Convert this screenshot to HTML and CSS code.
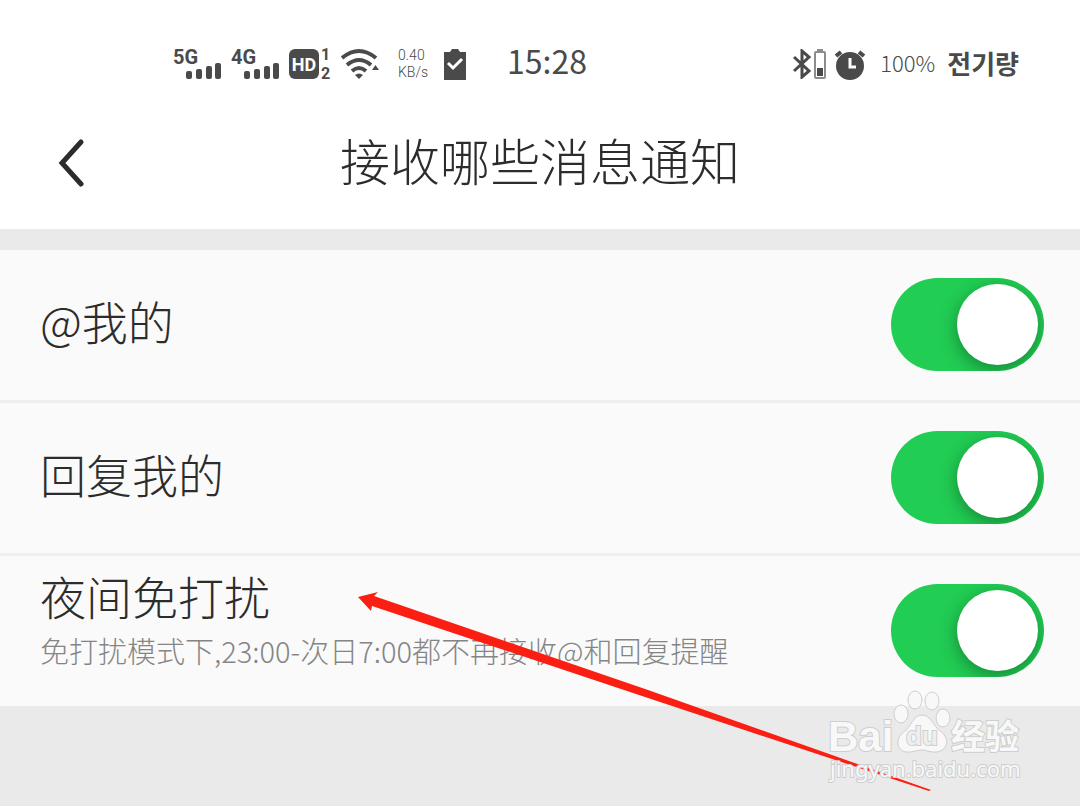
FILE: index.html
```html
<!DOCTYPE html>
<html lang="zh-CN">
<head>
	<title>接收哪些消息通知</title>
	<meta charset="utf-8">
	<meta name="viewport" content="width=device-width, initial-scale=1">
	<link rel="stylesheet" href="styles.css">
</head>
<body>
	<!-- 状态栏 -->
	<div class="status">
		<div class="status-left">
			<svg class="signal" width="49" height="40" viewBox="0 -3 49 40">
				<text x="0" y="17">5G</text>
				<rect x="13" y="24" width="6" height="8" rx="2"/>
				<rect x="23" y="22" width="6" height="10" rx="2"/>
				<rect x="33" y="19" width="6" height="13" rx="2"/>
				<rect x="42" y="16" width="6" height="16" rx="2"/>
			</svg>
			<svg class="signal" width="49" height="40" viewBox="0 -3 49 40">
				<text x="0" y="17">4G</text>
				<rect x="13" y="24" width="6" height="8" rx="2"/>
				<rect x="23" y="22" width="6" height="10" rx="2"/>
				<rect x="33" y="19" width="6" height="13" rx="2"/>
				<rect x="42" y="16" width="6" height="16" rx="2"/>
			</svg>
			<svg class="hd" width="43" height="40" viewBox="0 -3 43 40">
				<rect x="0" y="2" width="30" height="30" rx="6"/>
				<text class="hd-text" x="15" y="24">HD</text>
				<text class="sim" x="32" y="13">1</text>
				<text class="sim" x="32" y="32">2</text>
			</svg>
			<svg class="wifi" width="39" height="32" viewBox="0 0 39 32">
				<path d="M1 10Q18 -4 35 10M6 17Q18 7 30 17M11 23Q18 17 25 23"/>
				<path class="fill" d="M14 27Q18 24 22 27L18 31ZM31 22L34.500 17L38 22Z"/>
			</svg>
			<div class="speed">
				<span>0.40</span>
				<span>KB/s</span>
			</div>
			<svg class="clipboard" width="22" height="31" viewBox="0 0 22 31">
				<path d="M0 3H6L8 0H14L16 3H22V31H0Z"/>
				<path class="tick" d="M4 14L9 19L18 10"/>
			</svg>
			<span class="time">15:28</span>
		</div>
		<div class="status-right">
			<svg class="bluetooth" width="20" height="30" viewBox="0 0 20 30">
				<path d="M2 8L17 22L10 28V2L17 8L2 22"/>
			</svg>
			<svg class="battery" width="12" height="30" viewBox="0 0 12 30">
				<rect class="shell" x="1" y="3" width="10" height="26" rx="1"/>
				<rect class="cap" x="3" y="0" width="6" height="3"/>
				<rect x="3" y="19" width="6" height="8"/>
			</svg>
			<svg class="alarm" width="32" height="31" viewBox="0 0 32 31">
				<circle cx="16" cy="17" r="14"/>
				<path d="M2 7L7 3M30 7L25 3"/>
				<path class="hand" d="M16 9V18H22"/>
			</svg>
			<span class="percent">100%</span>
			<span class="power" lang="ko">전기량</span>
		</div>
	</div>

	<!-- 标题栏 -->
	<header class="header">
		<button class="back" type="button" aria-label="返回">
			<svg width="26" height="50" viewBox="0 0 26 50">
				<path d="M23 4L4 25L23 46"/>
			</svg>
		</button>
		<h1>接收哪些消息通知</h1>
	</header>

	<!-- 设置列表 -->
	<main class="list">
		<div class="item">
			<label for="at">@我的</label>
			<input class="switch" type="checkbox" id="at" checked>
		</div>
		<div class="item">
			<label for="reply">回复我的</label>
			<input class="switch" type="checkbox" id="reply" checked>
		</div>
		<div class="item">
			<label for="night">
				夜间免打扰
				<small>免打扰模式下,23:00-次日7:00都不再接收@和回复提醒</small>
			</label>
			<input class="switch" type="checkbox" id="night" checked>
		</div>

		<!-- 红色箭头 -->
		<svg class="arrow" width="574" height="200" viewBox="0 0 574 200">
			<path d="M0 6L20 1L16 5L290 99L573 199L571 200L287 106L14 15L13 20Z"/>
		</svg>
	</main>

	<!-- 水印 -->
	<div class="watermark">
		<svg width="196" height="98" viewBox="0 0 196 98">
			<text class="bai" x="0" y="61">Bai</text>
			<ellipse cx="73" cy="24" rx="7" ry="9"/>
			<ellipse cx="87" cy="10" rx="7" ry="9"/>
			<ellipse cx="104" cy="11" rx="7" ry="9"/>
			<ellipse cx="115" cy="28" rx="7" ry="9"/>
			<path d="M94 25C103 25 105 36 112 41C121 47 122 59 109 62C103 63 99 60 94 60C88 60 84 63 78 62C67 60 68 47 76 42C83 37 85 25 94 25Z"/>
			<text class="du" x="94" y="55">du</text>
			<text class="jingyan" x="123" y="59">经验</text>
			<text class="site" x="2" y="87">jingyan.baidu.com</text>
		</svg>
	</div>
</body>
</html>
```

FILE: styles.css
```css
*{
	box-sizing: border-box;
}
body{
	margin: 0;
	min-height: 100vh;
	background-color: #eaeaea;
	color: #2c2c2c;
	font-family: "Noto Sans CJK SC", sans-serif;
	font-weight: 300;
	/*相对定位*/
	position: relative;
}

/*状态栏*/
.status{
	display: flex;
	justify-content: space-between;
	align-items: center;
	height: 128px;
	padding: 0 61px 0 173px;
	background-color: #ffffff;
	color: #4a4a4a;
}
.status-left,
.status-right{
	display: flex;
	align-items: center;
}
.status svg{
	fill: #4a4a4a;
}
.signal,
.hd{
	margin-right: 9px;
	font: bold 20px "Roboto", sans-serif;
}
.hd .hd-text{
	fill: #ffffff;
	font-size: 18px;
	text-anchor: middle;
}
.hd .sim{
	font-size: 16px;
}
.wifi path{
	fill: none;
	stroke: #4a4a4a;
	stroke-width: 4;
}
.wifi .fill{
	fill: #4a4a4a;
	stroke: none;
}
.speed{
	display: flex;
	flex-direction: column;
	margin: 0 16px 0 18px;
	font-family: "Roboto", sans-serif;
	font-size: 14px;
	line-height: 17px;
}
.clipboard .tick{
	fill: none;
	stroke: #ffffff;
	stroke-width: 3;
}
.time{
	margin-left: 41px;
	padding-bottom: 8px;
	font-size: 32px;
	font-weight: 400;
	line-height: 40px;
}
.status .bluetooth{
	fill: none;
	stroke: #4a4a4a;
	stroke-width: 3;
}
.battery{
	margin: 0 8px 0 2px;
}
.battery .shell{
	fill: none;
	stroke: #8c8c8c;
	stroke-width: 2;
}
.battery .cap{
	fill: #8c8c8c;
}
.alarm path{
	fill: none;
	stroke: #4a4a4a;
	stroke-width: 4;
}
.alarm .hand{
	stroke: #ffffff;
	stroke-width: 3;
}
.percent{
	margin: 0 12px 0 14px;
	padding-bottom: 4px;
	font-size: 22px;
}
.power{
	padding-bottom: 4px;
	font-family: "Noto Sans CJK KR", sans-serif;
	font-size: 26px;
	font-weight: bold;
}

/*标题栏*/
.header{
	display: grid;
	grid-template-columns: 84px 1fr 84px;
	align-items: center;
	height: 101px;
	padding-bottom: 32px;
	background-color: #ffffff;
}
.header h1{
	margin: 0;
	padding-bottom: 8px;
	font-size: 50px;
	font-weight: 300;
	line-height: 60px;
	text-align: center;
}
.back{
	display: flex;
	justify-content: flex-end;
	padding: 0;
	border: 0;
	background: none;
}
.back path{
	fill: none;
	stroke: #2c2c2c;
	stroke-width: 5;
	stroke-linecap: round;
}

/*设置列表*/
.list{
	margin-top: 21px;
	position: relative;
}
.item{
	display: flex;
	justify-content: space-between;
	align-items: center;
	height: 153px;
	padding: 0 36px 2px 40px;
	border-bottom: 3px solid #eeeeee;
	background-color: #fafafa;
}
.item label{
	padding-bottom: 8px;
	font-size: 46px;
	line-height: 60px;
}
.item:nth-of-type(3){
	border-bottom-color: #eaeaea;
}
.item small{
	display: block;
	padding-bottom: 12px;
	color: #858585;
	font-size: 29px;
	line-height: 50px;
}

/*开关*/
.switch{
	appearance: none;
	flex: none;
	width: 153px;
	height: 93px;
	margin: 0;
	padding: 6px;
	border-radius: 47px;
	background-color: #cccccc;
}
.switch::before{
	content: "";
	display: block;
	width: 81px;
	height: 81px;
	border-radius: 50%;
	background-color: #ffffff;
	box-shadow: 0 5px 18px rgba(0, 0, 0, 0.35);
}
.switch:checked{
	background-color: #21cd53;
	overflow: hidden;
}
.switch:checked::before{
	margin-left: auto;
}

/*箭头盖在列表上面*/
.arrow{
	position: absolute;
	left: 358px;
	top: 341px;
	fill: #fb1f13;
}

/*水印*/
.watermark{
	position: absolute;
	right: 56px;
	bottom: 18px;
}
.watermark svg{
	display: block;
	fill: #f8f8f8;
	stroke: #cecece;
	stroke-width: 1;
}
.watermark text{
	paint-order: stroke;
	stroke-width: 2;
}
.bai{
	font: bold 42px "Liberation Sans", sans-serif;
}
.watermark .du{
	font: bold 26px "Liberation Sans", sans-serif;
	text-anchor: middle;
	fill: #eeeeee;
}
.jingyan{
	font: bold 34px "Noto Sans CJK SC", sans-serif;
}
.site{
	font: 22px "Noto Sans", sans-serif;
}
```
